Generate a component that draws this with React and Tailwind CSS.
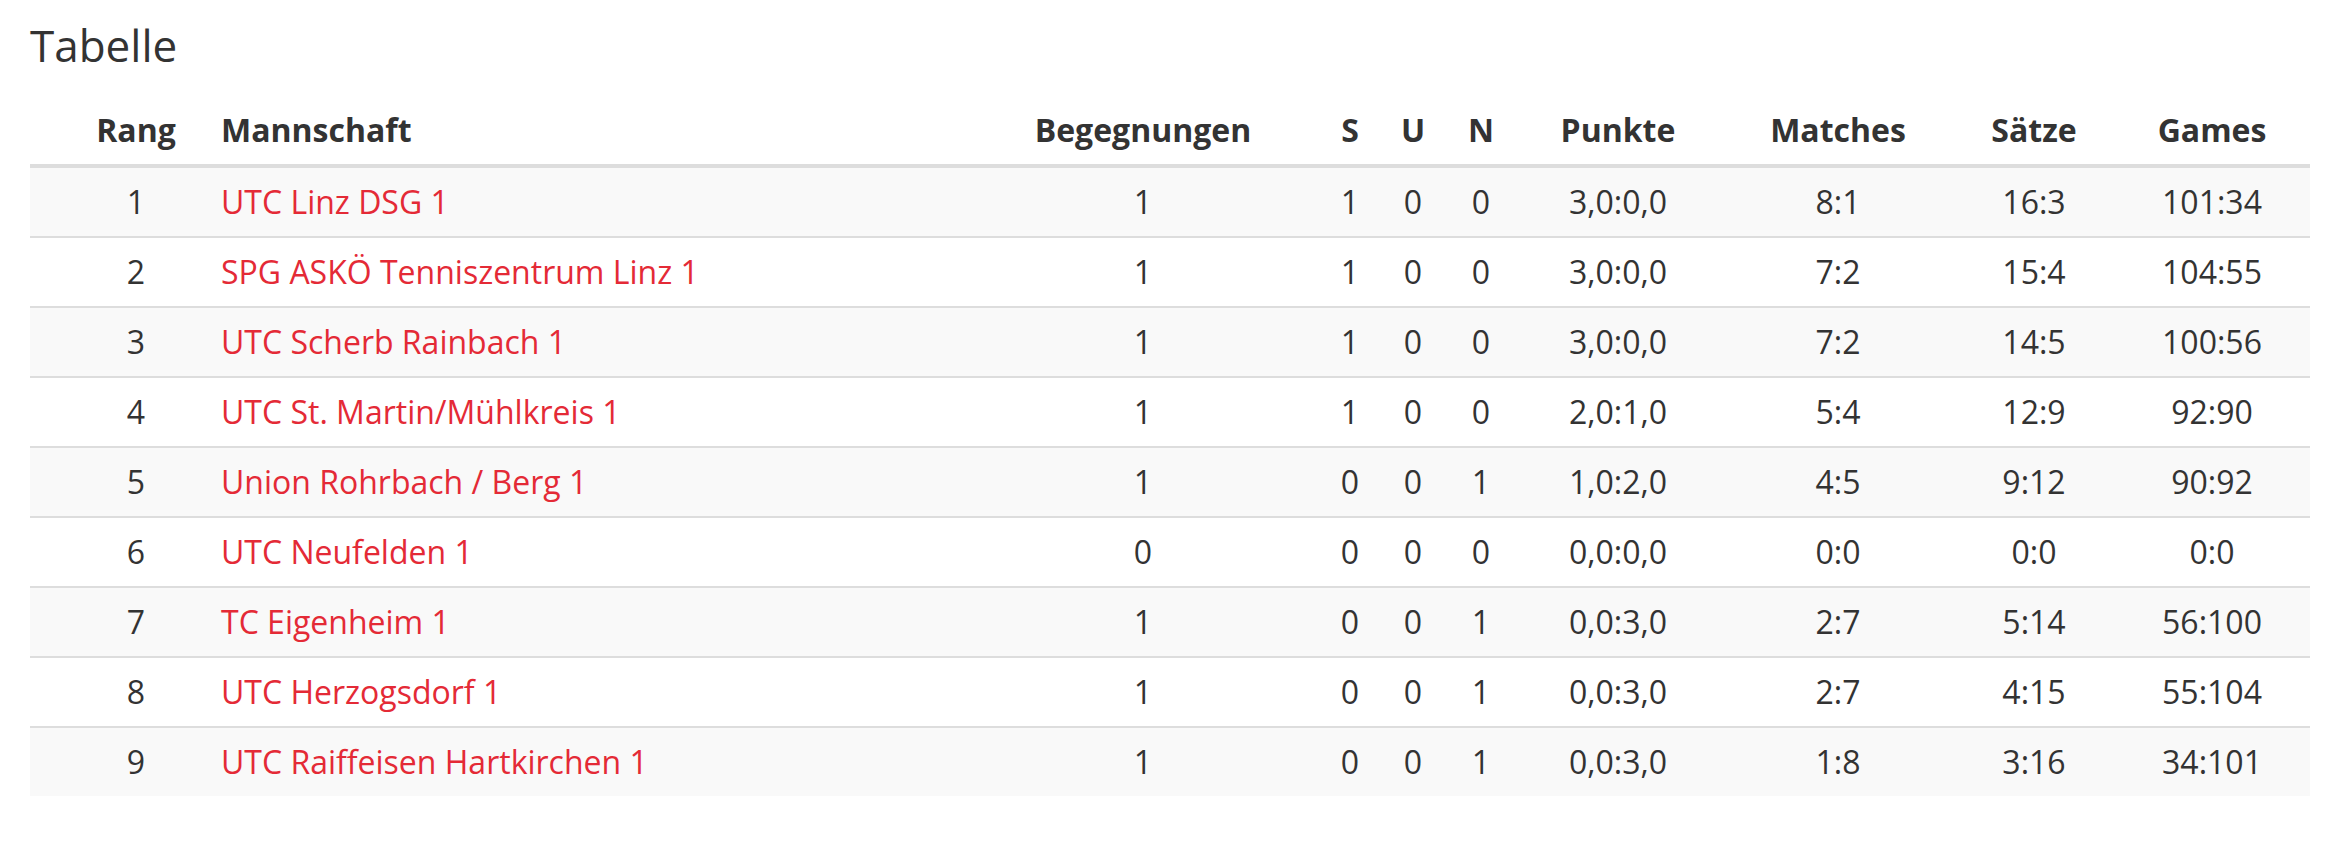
import React from 'react';

const teams = [
  { rang: 1, name: 'UTC Linz DSG 1', beg: 1, s: 1, u: 0, n: 0, punkte: '3,0:0,0', matches: '8:1', saetze: '16:3', games: '101:34' },
  { rang: 2, name: 'SPG ASKÖ Tenniszentrum Linz 1', beg: 1, s: 1, u: 0, n: 0, punkte: '3,0:0,0', matches: '7:2', saetze: '15:4', games: '104:55' },
  { rang: 3, name: 'UTC Scherb Rainbach 1', beg: 1, s: 1, u: 0, n: 0, punkte: '3,0:0,0', matches: '7:2', saetze: '14:5', games: '100:56' },
  { rang: 4, name: 'UTC St. Martin/Mühlkreis 1', beg: 1, s: 1, u: 0, n: 0, punkte: '2,0:1,0', matches: '5:4', saetze: '12:9', games: '92:90' },
  { rang: 5, name: 'Union Rohrbach / Berg 1', beg: 1, s: 0, u: 0, n: 1, punkte: '1,0:2,0', matches: '4:5', saetze: '9:12', games: '90:92' },
  { rang: 6, name: 'UTC Neufelden 1', beg: 0, s: 0, u: 0, n: 0, punkte: '0,0:0,0', matches: '0:0', saetze: '0:0', games: '0:0' },
  { rang: 7, name: 'TC Eigenheim 1', beg: 1, s: 0, u: 0, n: 1, punkte: '0,0:3,0', matches: '2:7', saetze: '5:14', games: '56:100' },
  { rang: 8, name: 'UTC Herzogsdorf 1', beg: 1, s: 0, u: 0, n: 1, punkte: '0,0:3,0', matches: '2:7', saetze: '4:15', games: '55:104' },
  { rang: 9, name: 'UTC Raiffeisen Hartkirchen 1', beg: 1, s: 0, u: 0, n: 1, punkte: '0,0:3,0', matches: '1:8', saetze: '3:16', games: '34:101' },
];

const Tabelle = () => {
  return (
    <div className="px-[30px] pt-[21px] bg-white min-h-[848px] text-[#333] font-['Open_Sans',sans-serif]">
      <h3 className="text-[44px] leading-[48px] font-normal mb-[27px]">Tabelle</h3>

      <table className="w-[2280px] table-fixed border-collapse text-[32px] leading-[44px]">
        <colgroup>
          <col className="w-[175px]" />
          <col className="w-[759px]" />
          <col className="w-[358px]" />
          <col className="w-[56px]" />
          <col className="w-[70px]" />
          <col className="w-[66px]" />
          <col className="w-[208px]" />
          <col className="w-[232px]" />
          <col className="w-[160px]" />
          <col className="w-[196px]" />
        </colgroup>
        <thead>
          <tr className="font-bold">
            <th className="pl-[45px] pr-[8px] py-3 text-center border-b-4 border-[#ddd]">Rang</th>
            <th className="px-4 py-3 text-left border-b-4 border-[#ddd]">Mannschaft</th>
            <th className="px-2 py-3 text-center border-b-4 border-[#ddd]">Begegnungen</th>
            <th className="px-0 py-3 text-center border-b-4 border-[#ddd]">S</th>
            <th className="px-0 py-3 text-center border-b-4 border-[#ddd]">U</th>
            <th className="px-0 py-3 text-center border-b-4 border-[#ddd]">N</th>
            <th className="px-2 py-3 text-center border-b-4 border-[#ddd]">Punkte</th>
            <th className="px-2 py-3 text-center border-b-4 border-[#ddd]">Matches</th>
            <th className="px-2 py-3 text-center border-b-4 border-[#ddd]">Sätze</th>
            <th className="px-2 py-3 text-center border-b-4 border-[#ddd]">Games</th>
          </tr>
        </thead>
        <tbody>
          {teams.map((t, i) => {
            const cell = i === 0 ? 'py-3' : 'py-3 border-t-2 border-[#ddd]';
            return (
              <tr key={t.rang} className={i % 2 === 0 ? 'bg-[#f9f9f9]' : 'bg-white'}>
                <td className={`pl-[45px] pr-[8px] text-center ${cell}`}>{t.rang}</td>
                <td className={`px-4 text-left ${cell}`}>
                  <a href="#" className="text-[#e42a36] no-underline">{t.name}</a>
                </td>
                <td className={`px-2 text-center ${cell}`}>{t.beg}</td>
                <td className={`px-0 text-center ${cell}`}>{t.s}</td>
                <td className={`px-0 text-center ${cell}`}>{t.u}</td>
                <td className={`px-0 text-center ${cell}`}>{t.n}</td>
                <td className={`px-2 text-center ${cell}`}>{t.punkte}</td>
                <td className={`px-2 text-center ${cell}`}>{t.matches}</td>
                <td className={`px-2 text-center ${cell}`}>{t.saetze}</td>
                <td className={`px-2 text-center ${cell}`}>{t.games}</td>
              </tr>
            );
          })}
        </tbody>
      </table>
    </div>
  );
};

export default function App() {
  return <Tabelle />;
}
